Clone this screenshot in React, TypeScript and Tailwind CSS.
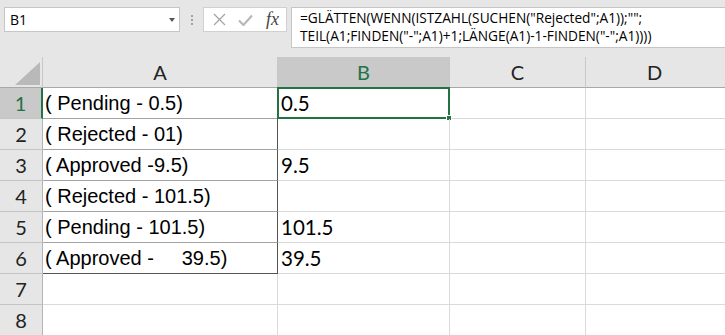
import React from "react";

const rows = [
  { n: 1, a: "( Pending - 0.5)", b: "0.5" },
  { n: 2, a: "( Rejected - 01)", b: "" },
  { n: 3, a: "( Approved -9.5)", b: "9.5" },
  { n: 4, a: "( Rejected - 101.5)", b: "" },
  { n: 5, a: "( Pending - 101.5)", b: "101.5" },
  { n: 6, a: "( Approved -     39.5)", b: "39.5" },
  { n: 7, a: "", b: "" },
  { n: 8, a: "", b: "" },
];

const calibri = { fontFamily: "Lato, 'Open Sans', sans-serif" };

export default function App() {
  return (
    <div className="w-[725px] h-[335px] overflow-hidden bg-white text-black">
      {/* formula bar */}
      <div className="h-[57px] bg-[#e6e6e6] flex items-start pt-[7px] pl-[4px]">
        <div className="w-[176px] h-[25px] bg-white border border-[#c6c6c6] flex items-center justify-between pl-[5px] pr-[4px]">
          <span className="text-[14px]" style={{ fontFamily: "'Open Sans', sans-serif" }}>
            B1
          </span>
          <span className="w-0 h-0 border-l-[3px] border-r-[3px] border-t-[4px] border-l-transparent border-r-transparent border-t-[#555]" />
        </div>
        <div className="w-[23px] h-[25px] flex flex-col items-center justify-center gap-[2px]">
          <span className="w-[2px] h-[2px] bg-[#a0a0a0]" />
          <span className="w-[2px] h-[2px] bg-[#a0a0a0]" />
          <span className="w-[2px] h-[2px] bg-[#a0a0a0]" />
        </div>
        <div className="w-[84px] h-[25px] bg-white border border-[#d0d0d0] flex items-center pl-[9px] gap-[12px]">
          <svg width="13" height="13" viewBox="0 0 13 13" className="shrink-0">
            <path d="M1 1 L12 12 M12 1 L1 12" stroke="#a6a6a6" strokeWidth="1.3" fill="none" />
          </svg>
          <svg width="15" height="12" viewBox="0 0 15 12" className="shrink-0">
            <path d="M1 6.5 L5.5 11 L14 1.5" stroke="#b8b8b8" strokeWidth="2.2" fill="none" />
          </svg>
          <span
            className="text-[18px] italic text-[#444] leading-none -mt-[2px] ml-[1px]"
            style={{ fontFamily: "'Liberation Serif', serif" }}
          >
            fx
          </span>
        </div>
        <div
          className="ml-[4px] flex-1 h-[41px] bg-white border border-r-0 border-[#c6c6c6] pl-[8px] pt-[1px] text-[13.7px] leading-[18px] text-black"
          style={{ fontFamily: "'Open Sans', sans-serif" }}
        >
          <div>=GLÄTTEN(WENN(ISTZAHL(SUCHEN("Rejected";A1));"";</div>
          <div>TEIL(A1;FINDEN("-";A1)+1;LÄNGE(A1)-1-FINDEN("-";A1))))</div>
        </div>
      </div>

      {/* sheet */}
      <div className="grid grid-cols-[43px_235px_172px_136px_1fr] auto-rows-[31px]" style={calibri}>
        {/* column headers */}
        <div className="bg-[#e6e6e6] border-r border-b border-r-[#c8c8c8] border-b-[#a8a8a8] flex items-end justify-end pr-[2px] pb-[2px]">
          <span className="w-[25px] h-[23px] bg-[#b9b9b9] [clip-path:polygon(100%_0,100%_100%,0_100%)]" />
        </div>
        <div className="bg-[#e6e6e6] border-r border-b border-r-[#c8c8c8] border-b-[#a8a8a8] flex items-center justify-center text-[20px] text-[#222]">
          A
        </div>
        <div className="bg-[#c9c9c9] border-r border-b border-r-[#c8c8c8] border-b-[#217346] flex items-center justify-center text-[20px] text-[#217346]">
          B
        </div>
        <div className="bg-[#e6e6e6] border-r border-b border-r-[#c8c8c8] border-b-[#a8a8a8] flex items-center justify-center text-[20px] text-[#222]">
          C
        </div>
        <div className="bg-[#e6e6e6] border-b border-b-[#a8a8a8] flex items-center justify-center text-[20px] text-[#222] pr-[2px]">
          D
        </div>

        {rows.map((r) => {
          const boxed = r.n <= 6;
          return (
            <React.Fragment key={r.n}>
              <div
                className={
                  r.n === 1
                    ? "bg-[#c9c9c9] border-r-2 border-b border-r-[#217346] border-b-[#c4c4c4] flex items-center justify-center text-[20px] text-[#217346]"
                    : "bg-[#e6e6e6] border-r border-b border-r-[#b4b4b4] border-b-[#c4c4c4] flex items-center justify-center text-[20px] text-[#222]"
                }
              >
                {r.n}
              </div>
              <div
                className={
                  boxed
                    ? r.n === 6
                      ? "border-r border-b border-r-[#555] border-b-[#555] flex items-center pl-[2px] text-[20px] whitespace-pre"
                      : "border-r border-b border-r-[#555] border-b-[#a3a3a3] flex items-center pl-[2px] text-[20px] whitespace-pre"
                    : "border-r border-b border-[#dadada]"
                }
                style={{ fontFamily: "'Liberation Sans', Arial, sans-serif" }}
              >
                {r.a}
              </div>
              <div className="relative border-r border-b border-[#dadada] flex items-center pl-[3px] text-[20.5px]">
                {r.b}
                {r.n === 1 && (
                  <div className="absolute -left-[1px] -top-[1px] w-[173px] h-[32px] border-2 border-[#217346]">
                    <div className="absolute -right-[4px] -bottom-[4px] w-[6px] h-[6px] bg-[#217346] border border-white" />
                  </div>
                )}
              </div>
              <div className="border-r border-b border-[#dadada]" />
              <div className="border-b border-[#dadada]" />
            </React.Fragment>
          );
        })}
      </div>
    </div>
  );
}
